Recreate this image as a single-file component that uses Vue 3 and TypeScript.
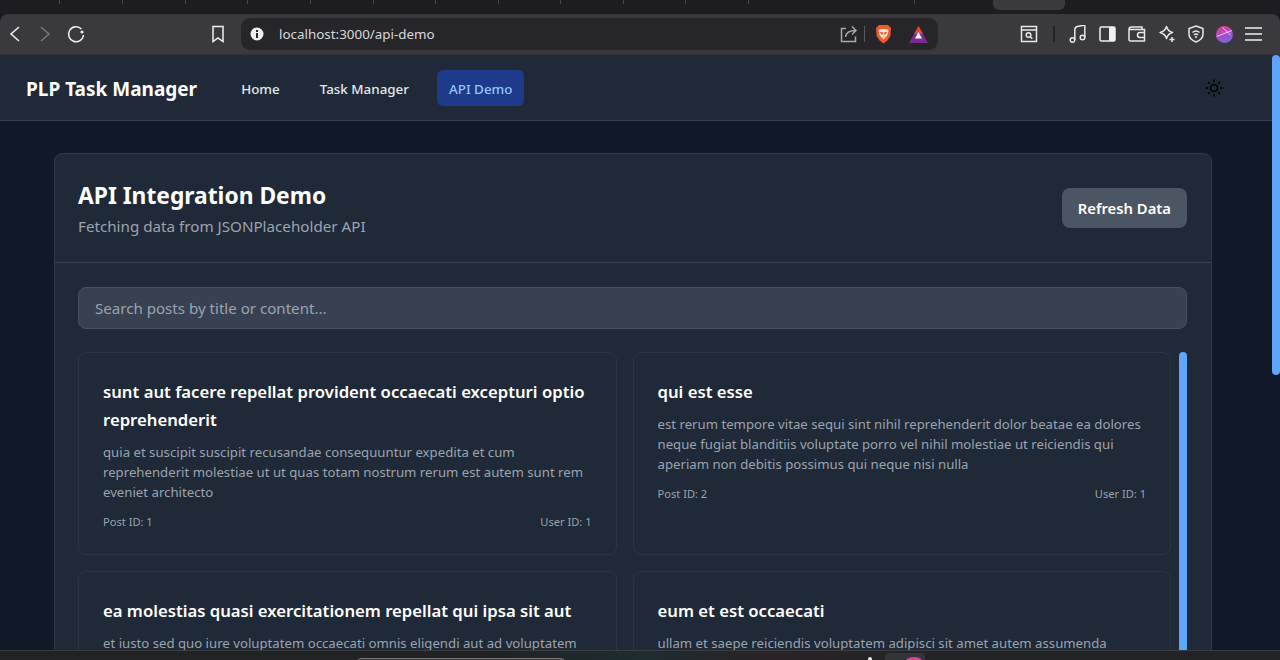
<template>
  <div class="screen">
    <div class="tabstrip">
      <span v-for="x in tabDividers" :key="x" class="tab-divider" :style="{ left: x + 'px' }"></span>
      <span class="tab-active"></span>
    </div>

    <div class="toolbar">
      <div class="nav-buttons">
        <svg class="tool-icon" width="14" height="20" viewBox="0 0 14 20"><path d="M11 3 3 10l8 7" stroke="#f1f1f1" /></svg>
        <svg class="tool-icon" width="14" height="20" viewBox="0 0 14 20"><path d="m3 3 8 7-8 7" stroke="#77777b" /></svg>
        <svg class="tool-icon reload" width="20" height="20" viewBox="0 0 20 20"><path d="M15.500 5A7.500 7.500 0 1 0 17.500 11" stroke="#f1f1f1" /><circle class="dot" cx="16" cy="8" r="1.600" /></svg>
      </div>
      <svg class="bookmark tool-icon" width="16" height="20" viewBox="0 0 16 20"><path d="M3 2.500h10v15L8 14l-5 3.500z" stroke="#f1f1f1" /></svg>
      <div class="address">
        <svg width="14" height="14" viewBox="0 0 14 14"><circle cx="7" cy="7" r="6.500" fill="#eee" /><rect x="6" y="6" width="2" height="5" fill="#26262a" /><rect x="6" y="3" width="2" height="2" fill="#26262a" /></svg>
        <span class="url">localhost:3000/api-demo</span>
        <svg class="share tool-icon" width="18" height="18" viewBox="0 0 18 18"><path d="M6 3.500H1.500v13h14v-5M5.500 12c.5-4 3.500-6.500 10-6.500M12 1.500l4 4-4 4" stroke="#a9a9ac" /></svg>
        <span class="address-sep"></span>
        <svg width="17" height="20" viewBox="0 0 17 20"><path d="M4 1h9l3 3-.6 8-3 4.500L8.500 19.500 4.600 16.500l-3-4.500L1 4z" fill="#f0592b" /><path d="M3.500 6 6 5h5l2.500 1-1 5-4 4.500-4-4.500z" fill="#fbe3d8" /><path d="M5 8h2.500L8.500 11l1-3H12l-1.500 2.500h-4zM7.500 12.500h2l-1 1z" fill="#f0592b" /></svg>
        <svg class="bat" width="19" height="17" viewBox="0 0 19 17"><path d="M9.500 0 19 17H0z" fill="#7b2b8f" /><path d="M9.500 0 14 8H5z" fill="#f0452d" /><path d="m9.500 6 3.500 6.500H6z" fill="#fff" /></svg>
      </div>
      <div class="extensions">
        <svg class="tool-icon" width="18" height="18" viewBox="0 0 18 18"><path d="M1.500 1.500h15v15h-15zM1.500 5h15" stroke="#e8e8e8" /><circle cx="8.500" cy="10" r="2.300" stroke="#e8e8e8" /><path d="m10.300 11.800 2 2" stroke="#e8e8e8" /></svg>
        <span class="ext-sep"></span>
        <svg class="tool-icon music" width="18" height="18" viewBox="0 0 18 18"><circle cx="3.500" cy="15" r="2.300" stroke="#e8e8e8" /><circle cx="13.500" cy="12.500" r="2.300" stroke="#e8e8e8" /><path d="M5.800 15V4.500c0-2 1-2.500 2.500-3l6.500-1.300c1-.2 1 .5 1 1V12.500" stroke="#e8e8e8" /></svg>
        <svg width="17" height="16" viewBox="0 0 17 16"><rect x="1" y="1" width="15" height="14" rx="1.500" fill="none" stroke="#f0f0f0" stroke-width="1.500" /><rect x="10" y="1" width="6" height="14" fill="#f0f0f0" /></svg>
        <svg class="tool-icon" width="18" height="16" viewBox="0 0 18 16"><path d="M1 3.500C1 2 2 1 3.500 1H14v2.500M1 3.500v10c0 .8.700 1.500 1.500 1.500h14V3.500zM17 6.500h-5a2.200 2.200 0 0 0 0 5h5" stroke="#e8e8e8" /></svg>
        <svg class="tool-icon" width="18" height="18" viewBox="0 0 18 18"><path d="M8.500 1.500c1 3.500 2.500 5 6 6-3.500 1-5 2.500-6 6-1-3.500-2.500-5-6.500-6 4-1 5.500-2.500 6.500-6zM14 12v5M11.500 14.500h5" stroke="#e8e8e8" stroke-linejoin="round" /></svg>
        <svg class="tool-icon" width="16" height="18" viewBox="0 0 16 18"><path d="M8 1 15 3.500V9c0 4-3 6.500-7 8-4-1.500-7-4-7-8V3.500z" stroke="#e8e8e8" /><path d="M4.500 7.500c2-1.700 5-1.700 7 0M6 9.800c1.200-1 2.800-1 4 0" stroke="#e8e8e8" /><circle class="dot" cx="8" cy="12" r="1" /></svg>
        <svg width="17" height="17" viewBox="0 0 17 17">
          <defs>
            <linearGradient id="avatar-fill" x1="0.300" y1="0" x2="0.700" y2="1">
              <stop offset="0" stop-color="#e0409a" />
              <stop offset="0.550" stop-color="#a44cc8" />
              <stop offset="1" stop-color="#6f6fe0" />
            </linearGradient>
          </defs>
          <circle cx="8.500" cy="8.500" r="8.500" fill="url(#avatar-fill)" />
          <path d="M0.500 10.500 16 4.500M6.500 1.500 14.500 9" stroke="#f4e9f4" stroke-width="0.800" fill="none" />
        </svg>
        <svg class="tool-icon" width="17" height="14" viewBox="0 0 17 14"><path d="M0 1h17M0 7h17M0 13h17" stroke="#f0f0f0" /></svg>
      </div>
    </div>

    <div class="viewport">
      <header class="navbar">
        <span class="brand">PLP Task Manager</span>
        <nav class="links">
          <a v-for="link in links" :key="link" class="link" :class="{ active: link === 'API Demo' }">{{ link }}</a>
        </nav>
        <svg class="theme" width="20" height="20" viewBox="0 0 20 20"><circle cx="10" cy="10" r="3.500" /><path d="M10 1.500v2.500M10 16v2.500M1.500 10H4M16 10h2.500M4 4l1.800 1.800M14.200 14.200 16 16M4 16l1.800-1.800M14.200 5.800 16 4" /></svg>
      </header>

      <main class="panel">
        <div class="panel-head">
          <div class="head-text">
            <h1>API Integration Demo</h1>
            <p>Fetching data from JSONPlaceholder API</p>
          </div>
          <button class="refresh" type="button">Refresh Data</button>
        </div>
        <div class="panel-body">
          <input class="search" type="text" placeholder="Search posts by title or content..." />
          <div class="posts-wrap">
            <div class="posts">
              <article v-for="post in posts" :key="post.id" class="post">
                <h3>{{ post.title }}</h3>
                <p>{{ post.body }}</p>
                <div class="meta">
                  <span>Post ID: {{ post.id }}</span>
                  <span>User ID: 1</span>
                </div>
              </article>
            </div>
            <span class="inner-thumb"></span>
          </div>
        </div>
      </main>

      <span class="page-thumb"></span>
    </div>

    <div class="taskbar">
      <span class="task-search"></span>
      <span class="task-dot"></span>
      <span class="task-tile"></span>
      <span class="task-icon"></span>
    </div>
  </div>
</template>

<script setup lang="ts">
const tabDividers = [59, 122, 185, 247, 310, 373, 435, 498, 560, 623, 685, 748, 914]
const links = ["Home", "Task Manager", "API Demo"]

const posts = [
  {
    id: 1,
    title: "sunt aut facere repellat provident occaecati excepturi optio reprehenderit",
    body: "quia et suscipit suscipit recusandae consequuntur expedita et cum reprehenderit molestiae ut ut quas totam nostrum rerum est autem sunt rem eveniet architecto",
  },
  {
    id: 2,
    title: "qui est esse",
    body: "est rerum tempore vitae sequi sint nihil reprehenderit dolor beatae ea dolores neque fugiat blanditiis voluptate porro vel nihil molestiae ut reiciendis qui aperiam non debitis possimus qui neque nisi nulla",
  },
  {
    id: 3,
    title: "ea molestias quasi exercitationem repellat qui ipsa sit aut",
    body: "et iusto sed quo iure voluptatem occaecati omnis eligendi aut ad voluptatem doloribus vel accusantium quis pariatur molestiae porro eius odio et labore et velit aut",
  },
  {
    id: 4,
    title: "eum et est occaecati",
    body: "ullam et saepe reiciendis voluptatem adipisci sit amet autem assumenda provident rerum culpa quis hic commodi nesciunt rem tenetur doloremque ipsam iure",
  },
]
</script>

<style>
html,
body {
  margin: 0;
  overflow: hidden;
}
</style>

<style scoped>
.screen {
  width: 1280px;
  height: 660px;
  display: flex;
  flex-direction: column;
  overflow: hidden;
  background: #111827;
  font-family: "Noto Sans", "Open Sans", sans-serif;
}

.tabstrip {
  position: relative;
  height: 14px;
  flex: none;
  background: #1d1d21;
}

.tab-divider {
  position: absolute;
  top: 0;
  width: 1px;
  height: 4px;
  background: #45454a;
}

.tab-active {
  position: absolute;
  left: 993px;
  top: 0;
  width: 72px;
  height: 10px;
  background: #3a3a3e;
  border-radius: 0 0 6px 6px;
}

.toolbar {
  height: 41px;
  flex: none;
  display: flex;
  align-items: center;
  background: #3a3a3e;
  border-bottom: 1px solid #333338;
  box-sizing: border-box;
  border-radius: 8px 8px 0 0;
  padding-left: 8px;
}

.tool-icon path,
.tool-icon circle {
  fill: none;
  stroke-width: 1.500;
}

.tool-icon .dot {
  fill: #f1f1f1;
  stroke: none;
}

.nav-buttons {
  width: 198px;
  display: flex;
  align-items: center;
  gap: 16px;
}

.reload {
  margin-left: -2px;
}

.bookmark {
  margin-left: 4px;
}

.address {
  width: 697px;
  height: 32px;
  margin-left: 15px;
  box-sizing: border-box;
  padding: 0 10px 0 9px;
  display: flex;
  align-items: center;
  background: #26262a;
  border-radius: 9px;
}

.url {
  margin-left: 15px;
  flex: 1;
  font-size: 13.400px;
  color: #d8d8da;
}

.share {
  margin-right: 6px;
}

.address-sep {
  width: 1px;
  height: 16px;
  background: #5a5a5e;
  margin-right: 10px;
}

.bat {
  margin-left: 17px;
}

.extensions {
  margin-left: 82px;
  display: flex;
  align-items: center;
  gap: 12px;
}

.ext-sep {
  width: 2px;
  height: 16px;
  background: #222226;
  margin: 0 2px 0 3px;
}

.viewport {
  position: relative;
  flex: 1;
  min-height: 0;
  overflow: hidden;
}

.navbar {
  height: 66px;
  box-sizing: border-box;
  display: flex;
  align-items: center;
  padding: 0 56px 0 26px;
  background: #1f2937;
  border-bottom: 1px solid #374151;
}

.brand {
  padding-top: 2px;
  font-size: 19px;
  font-weight: 700;
  color: #fff;
}

.links {
  display: flex;
  margin-left: 32px;
  gap: 16px;
}

.link {
  padding: 9px 12px 7px;
  font-size: 13.400px;
  line-height: 20px;
  font-weight: 500;
  border-radius: 6px;
  color: #e5e7eb;
}

.link.active {
  background: #1e3a8a;
  color: #93c5fd;
}

.theme {
  margin-left: auto;
  fill: none;
  stroke: #000;
  stroke-width: 1.500;
}

.panel {
  width: 1158px;
  box-sizing: border-box;
  margin: 32px 0 0 54px;
  background: #1f2937;
  border: 1px solid #2f3947;
  border-radius: 8px;
}

.panel-head {
  height: 109px;
  box-sizing: border-box;
  padding: 0 24px 0 23px;
  display: flex;
  align-items: center;
  justify-content: space-between;
  border-bottom: 1px solid #374151;
}

.head-text {
  padding-top: 2px;
}

h1 {
  margin: 0;
  font-size: 22.800px;
  line-height: 32px;
  font-weight: 700;
  color: #fff;
}

.panel-head p {
  margin: 2px 0 0;
  font-size: 15.200px;
  line-height: 24px;
  color: #9ca3af;
}

.refresh {
  height: 40px;
  padding: 0 16px;
  border: 0;
  border-radius: 8px;
  background: #4b5563;
  color: #fff;
  font: 600 14.800px "Noto Sans", "Open Sans", sans-serif;
}

.panel-body {
  padding: 24px 24px 24px 23px;
}

.search {
  display: block;
  width: 100%;
  height: 42px;
  box-sizing: border-box;
  padding: 0 16px;
  border: 1px solid #465061;
  border-radius: 8px;
  background: #374151;
  font: 15.100px "Noto Sans", "Open Sans", sans-serif;
  color: #fff;
  outline: none;
}

.search::placeholder {
  color: #9ca3af;
  opacity: 1;
}

.posts-wrap {
  position: relative;
  margin-top: 23px;
}

.posts {
  width: 1093px;
  display: grid;
  grid-template-columns: 1fr 1fr;
  gap: 16px;
}

.post {
  min-height: 203px;
  box-sizing: border-box;
  padding: 25px 24px 24px;
  display: flex;
  flex-direction: column;
  background: #1f2937;
  border: 1px solid #2a3442;
  border-radius: 8px;
}

.post h3 {
  margin: 0 0 8px;
  font-size: 16.700px;
  line-height: 28px;
  font-weight: 600;
  color: #fff;
}

.post p {
  margin: 0 0 12px;
  font-size: 13.200px;
  line-height: 20px;
  color: #9ca3af;
}

.meta {
  display: flex;
  justify-content: space-between;
  font-size: 11.100px;
  line-height: 16px;
  color: #9ca3af;
}

.inner-thumb {
  position: absolute;
  right: 0;
  top: 0;
  width: 8px;
  height: 400px;
  border-radius: 4px;
  background: #60a5fa;
}

.page-thumb {
  position: absolute;
  right: 0;
  top: 0;
  width: 8px;
  height: 320px;
  border-radius: 4px;
  background: #60a5fa;
}

.taskbar {
  position: relative;
  height: 10px;
  flex: none;
  overflow: hidden;
  background: linear-gradient(90deg, #202224 0 38%, #1d2c30 50%, #2a2227 60%, #222326 72%);
  border-top: 1px solid #3a3c3e;
  box-sizing: border-box;
}

.task-search {
  position: absolute;
  left: 357px;
  top: 7px;
  width: 206px;
  height: 8px;
  border-radius: 4px 4px 0 0;
  background: #3a3a3d;
  border: 1px solid #77777a;
}

.task-dot {
  position: absolute;
  left: 868px;
  top: 6px;
  width: 4px;
  height: 4px;
  border-radius: 2px 2px 0 0;
  background: #e6e6e6;
}

.task-tile {
  position: absolute;
  left: 885px;
  top: 2px;
  width: 40px;
  height: 8px;
  border-radius: 4px 4px 0 0;
  background: #333538;
}

.task-icon {
  position: absolute;
  left: 906px;
  top: 6px;
  width: 16px;
  height: 8px;
  border-radius: 50% 50% 0 0;
  background: #e0409a;
}
</style>
